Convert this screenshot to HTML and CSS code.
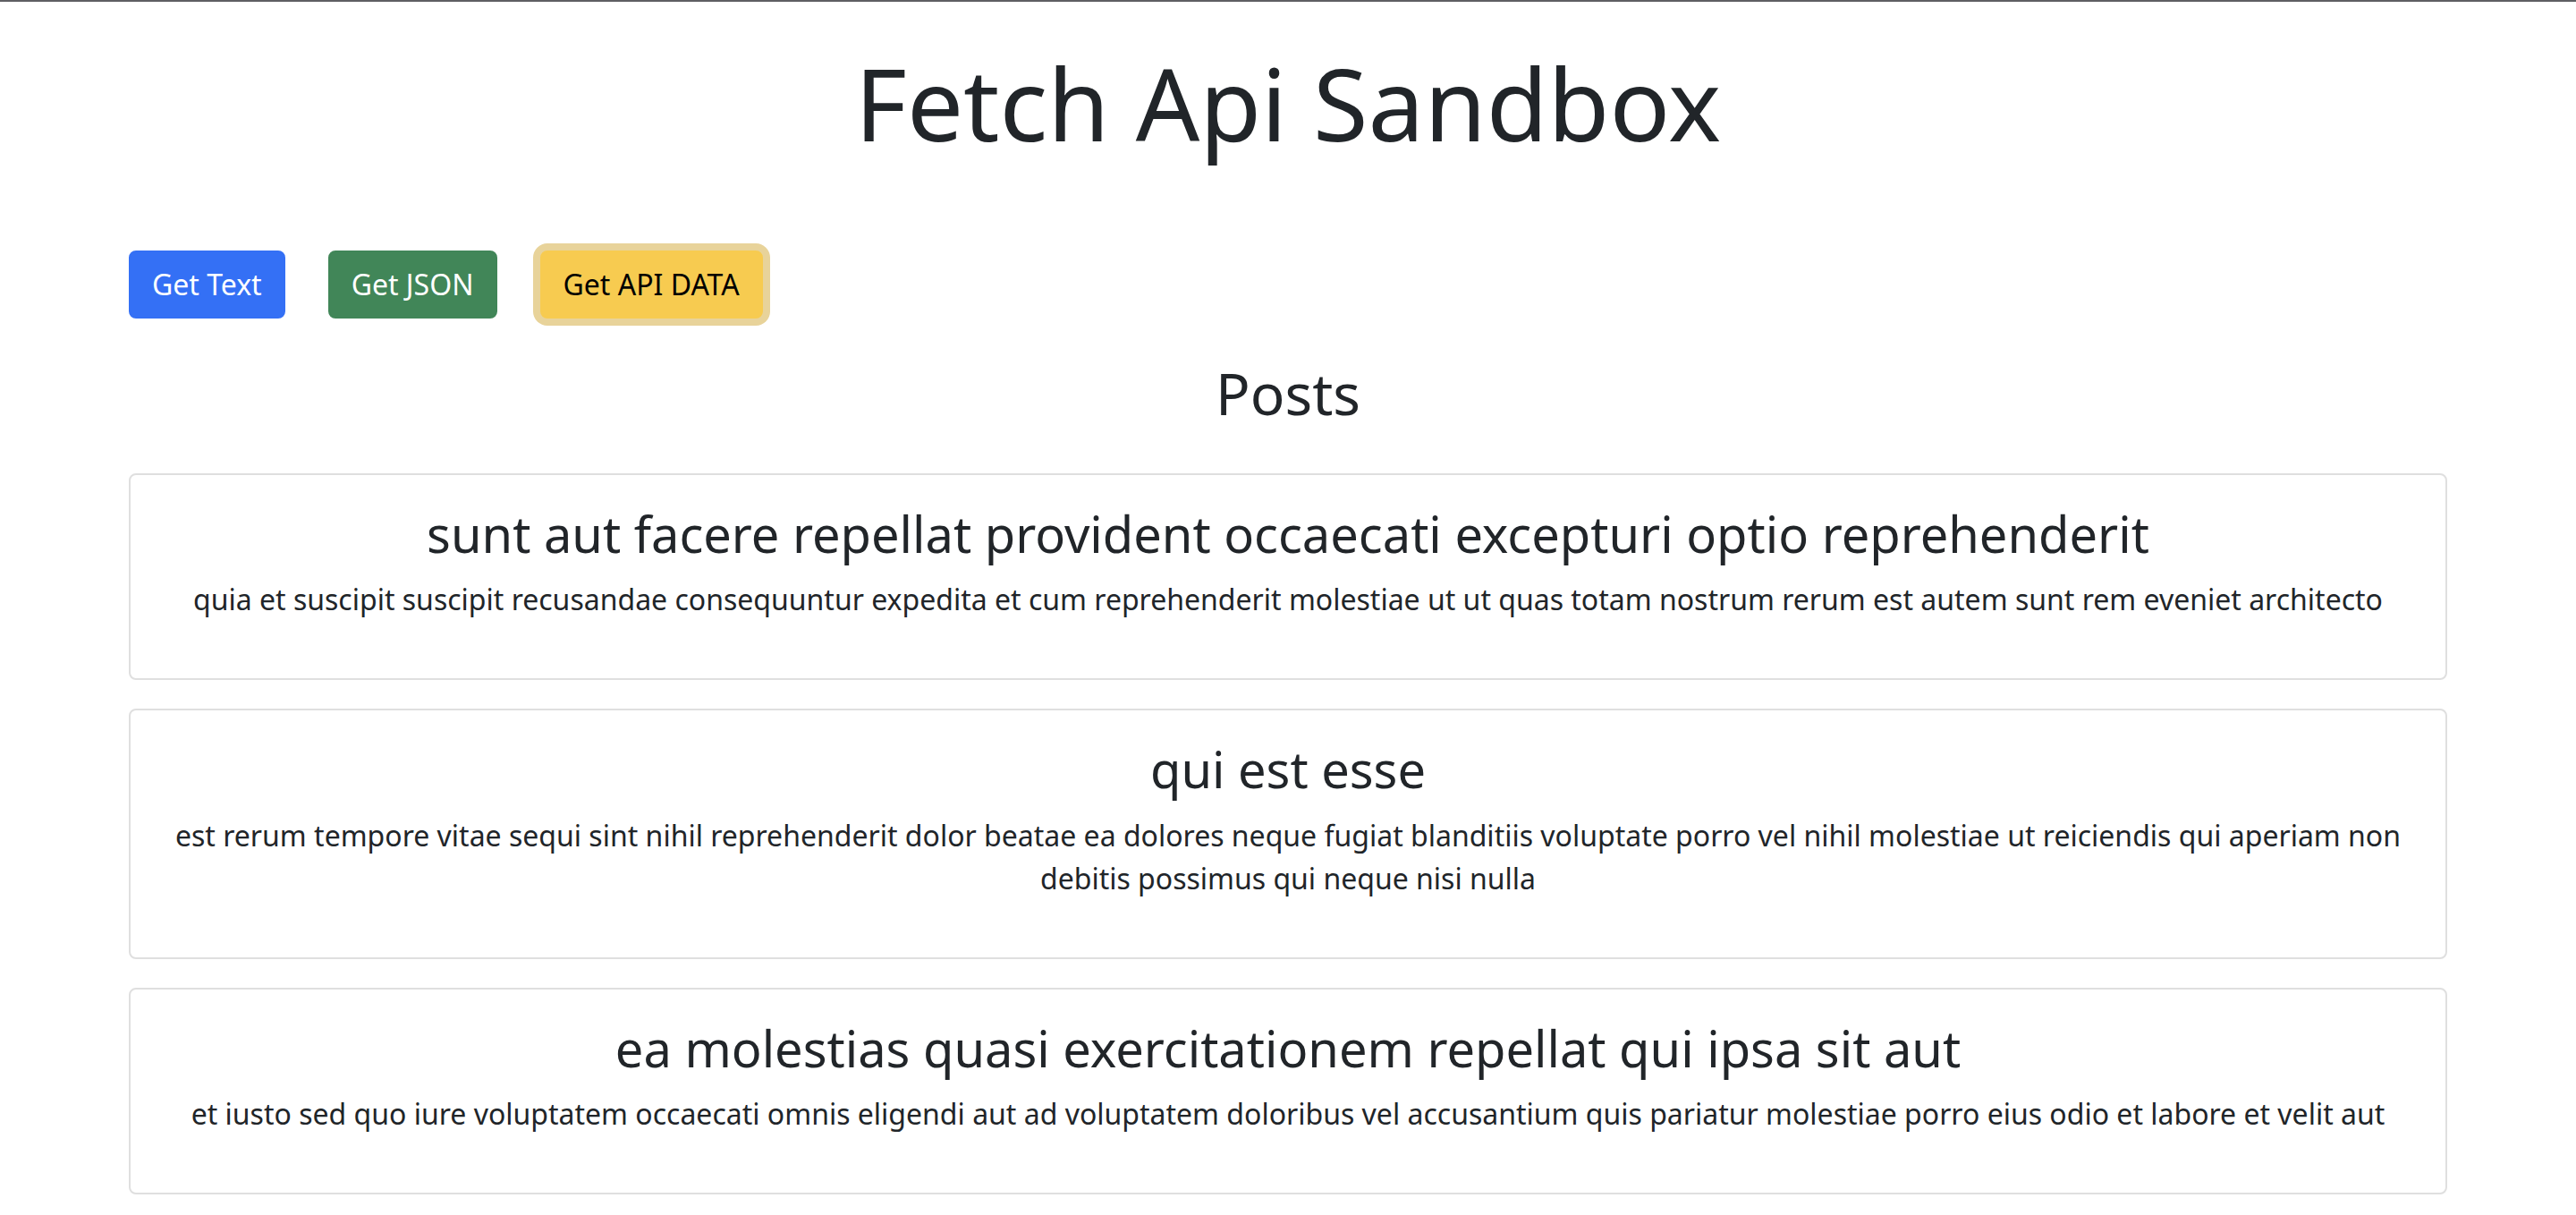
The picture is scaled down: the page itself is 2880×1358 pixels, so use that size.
FILE: index.html
```html
<!DOCTYPE html>
<html lang="en">
<head>
<meta charset="utf-8">
<title>Fetch Api Sandbox</title>
<link rel="stylesheet" href="styles.css">
</head>
<body>
<div class="topline"></div>
<div class="container">
  <h1 class="title">Fetch Api Sandbox</h1>
  <div class="actions">
    <button class="btn btn-blue">Get Text</button>
    <button class="btn btn-green">Get JSON</button>
    <button class="btn btn-yellow">Get API DATA</button>
  </div>
  <h2 class="section-title">Posts</h2>
  <div class="posts">
    <div class="card">
      <h3 class="card-title">sunt aut facere repellat provident occaecati excepturi optio reprehenderit</h3>
      <p class="card-text">quia et suscipit suscipit recusandae consequuntur expedita et cum reprehenderit molestiae ut ut quas totam nostrum rerum est autem sunt rem eveniet architecto</p>
    </div>
    <div class="card">
      <h3 class="card-title">qui est esse</h3>
      <p class="card-text">est rerum tempore vitae sequi sint nihil reprehenderit dolor beatae ea dolores neque fugiat blanditiis voluptate porro vel nihil molestiae ut reiciendis qui aperiam non debitis possimus qui neque nisi nulla</p>
    </div>
    <div class="card">
      <h3 class="card-title">ea molestias quasi exercitationem repellat qui ipsa sit aut</h3>
      <p class="card-text">et iusto sed quo iure voluptatem occaecati omnis eligendi aut ad voluptatem doloribus vel accusantium quis pariatur molestiae porro eius odio et labore et velit aut</p>
    </div>
  </div>
</div>
</body>
</html>
```

FILE: styles.css
```css
* { box-sizing: border-box; }
html, body {
  margin: 0;
  padding: 0;
  background: #ffffff;
}
body {
  font-family: "Noto Sans", "Open Sans", sans-serif;
  font-size: 32px;
  line-height: 48px;
  color: #212529;
}
.topline {
  height: 2px;
  background: #5f5f63;
}
.container {
  width: 2640px;
  margin: 0 auto;
  padding: 0 24px;
}
.title {
  margin: 46px 0 0;
  font-size: 112px;
  font-weight: 400;
  line-height: 1.2;
  text-align: center;
}
.actions {
  display: flex;
  gap: 48px;
  margin-top: 98px;
}
.btn {
  font-family: inherit;
  font-size: 32px;
  line-height: 48px;
  padding: 12px 24px;
  border: 2px solid transparent;
  border-radius: 8px;
  cursor: pointer;
}
.btn-blue {
  background: #3470f5;
  border-color: #3470f5;
  color: #ffffff;
}
.btn-green {
  background: #418658;
  border-color: #418658;
  color: #ffffff;
}
.btn-yellow {
  background: #f7cb50;
  border-color: #f7cb50;
  color: #000000;
  box-shadow: 0 0 0 8px #e8d39a;
}
.section-title {
  margin: 46px 0 50px;
  font-size: 64px;
  font-weight: 400;
  line-height: 1.2;
  text-align: center;
}
.posts {
  display: flex;
  flex-direction: column;
  gap: 32px;
}
.card {
  border: 2px solid #dfdfdf;
  border-radius: 8px;
  padding: 32px;
  text-align: center;
}
.card-title {
  margin: 0 0 16px;
  font-size: 56px;
  font-weight: 400;
  line-height: 1.2;
}
.card-text {
  margin: 0 0 32px;
}
```
